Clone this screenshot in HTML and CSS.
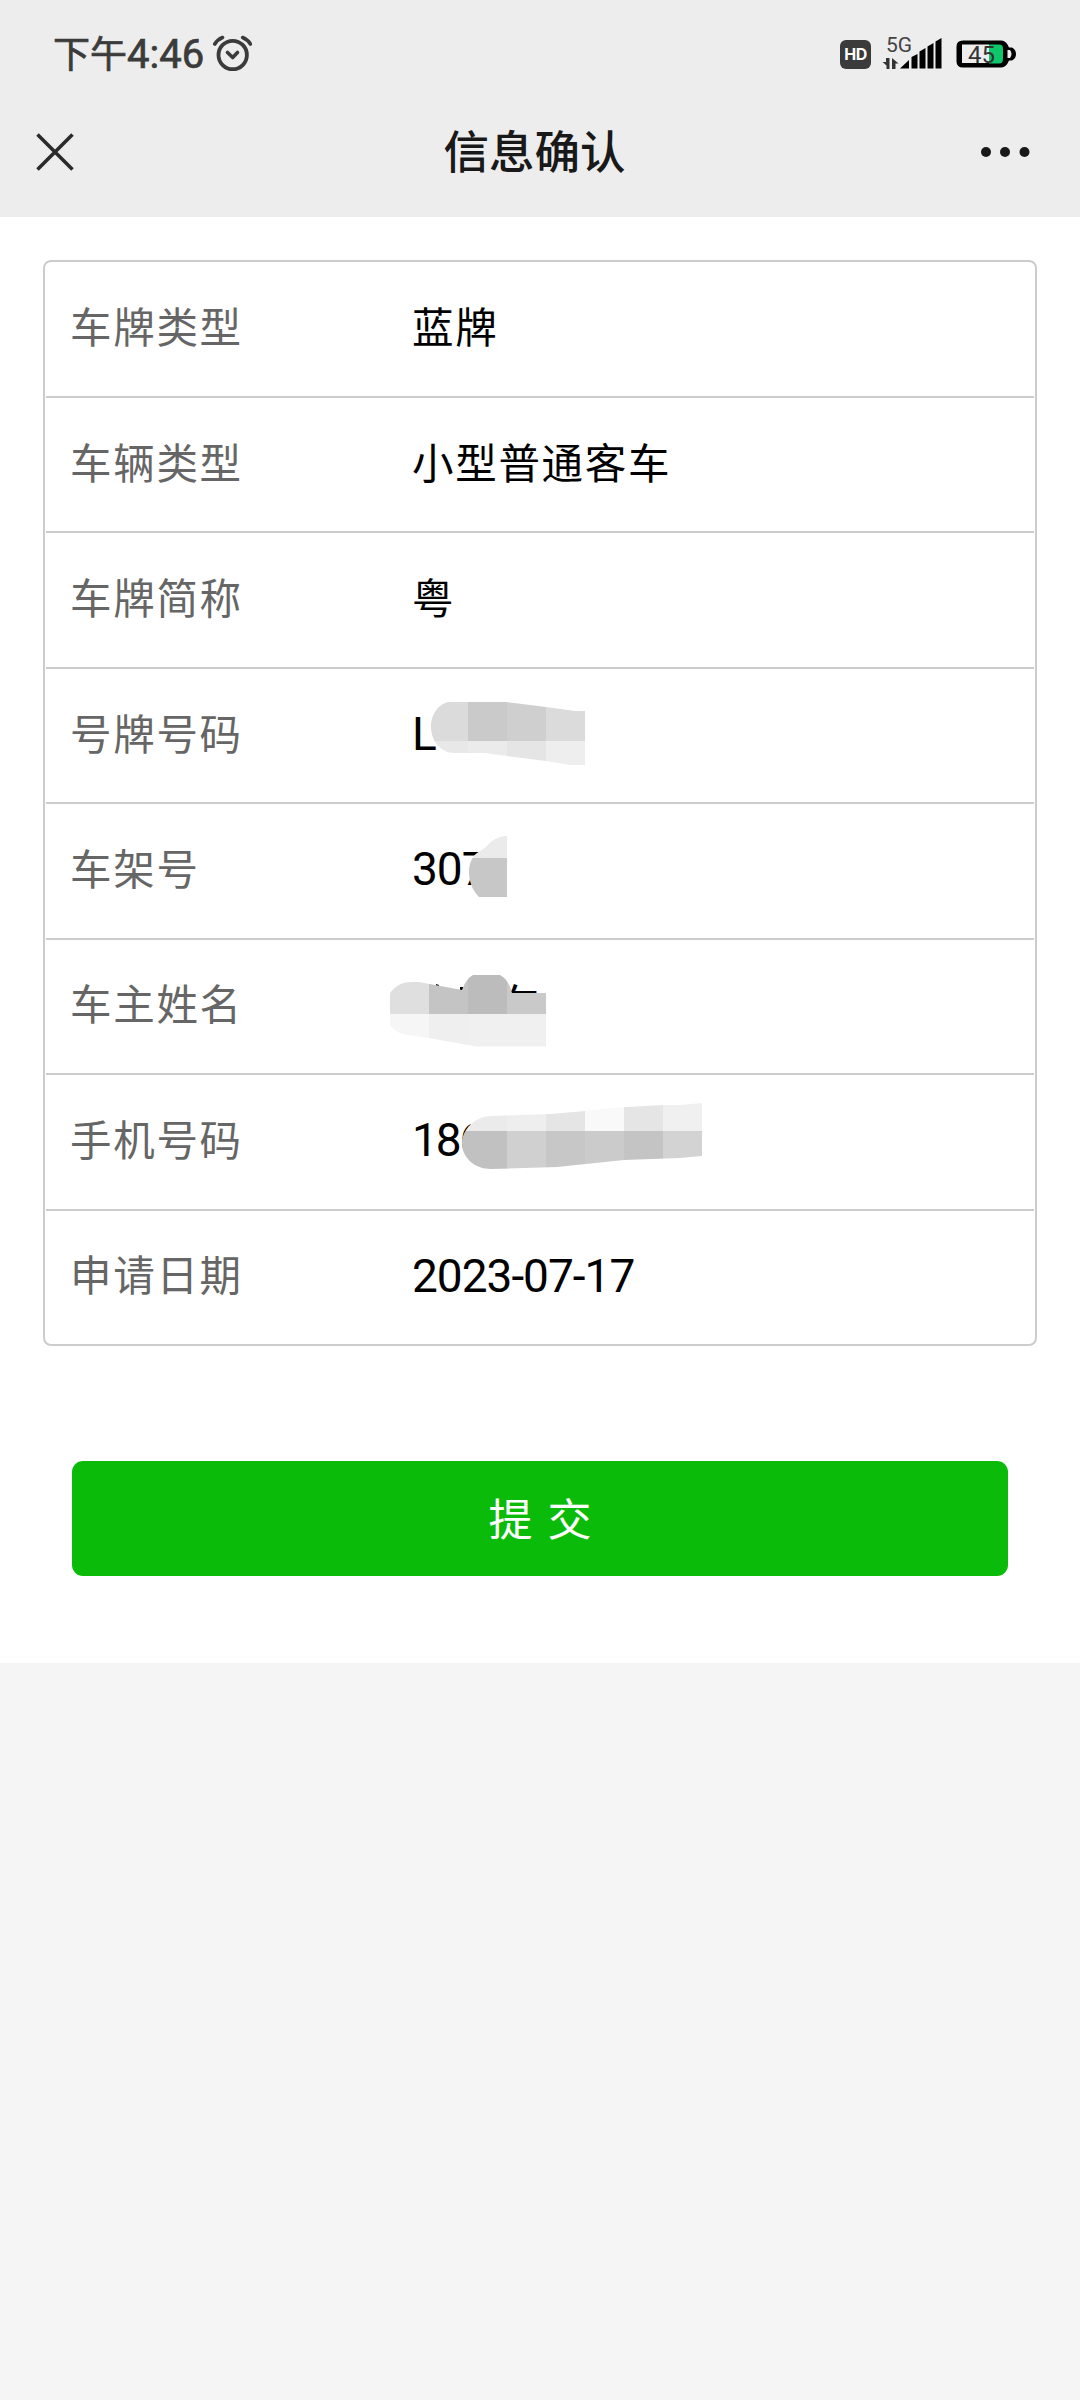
FILE: index.html
```
<!DOCTYPE html>
<html lang="zh-CN">
<head>
<meta charset="utf-8">
<title>信息确认</title>
<link rel="stylesheet" href="styles.css">
</head>
<body>
<header class="top">
  <div class="status">
    <span class="clock"><span class="period">下午</span>4:46</span>
    <svg class="alarm" width="40" height="38" viewBox="212 35 40 38" fill="none" stroke="#3b3b3b" stroke-linecap="round" stroke-linejoin="round">
      <circle cx="232.700" cy="55" r="14.200" stroke-width="3.800"/>
      <path d="M227.500 52.500l5.200 5 4.800-5" stroke-width="3.600"/>
      <path d="M214.800 44Q217.500 39.500 222.500 37.500M250.400 44Q247.500 39.500 242.700 37.500" stroke-width="3.600"/>
    </svg>
    <span class="hd">HD</span>
    <svg class="signal" width="62" height="56" viewBox="882 26 62 56">
      <text class="net" x="886" y="51.500">5G</text>
      <path fill="#333" d="M889.500 58v11h-3v-3.500l-4-3.500h3.500v-4zM892 58l6.500 5.500h-3v5.500h-3.500z"/>
      <path d="M900 68.500l9-8.500v8.500zM911.500 57l6-3v14.500h-6zM919.500 51.500l6-3.500v20.500h-6zM927.500 46.500l6-3.500v25.500h-6zM935.500 41.500l6-3.500v30.500h-6z"/>
    </svg>
    <svg class="battery" width="62" height="30" viewBox="955 39 62 30">
      <path d="M963 40.500h38q4 0 6.500 4l1.500 3h3q4 2 4 6.500t-4 6.500h-3l-1.500 3q-2.500 4-6.500 4h-38q-6.500 0-6.500-6v-15q0-6 6.500-6z"/>
      <rect x="962" y="44.500" width="27" height="18.500" fill="#ededed"/>
      <path d="M989 44.500h10q4 0 4 4v10.500q0 4.500-4 4.500h-10z" fill="#0dc76b"/>
      <path d="M1007.500 50h2.500q1.500 2 1.500 4t-1.500 4h-2.500z" fill="#ededed"/>
      <text class="charge" x="968" y="62.500">45</text>
    </svg>
  </div>
  <nav class="nav">
    <svg class="close" width="38" height="38" viewBox="0 0 38 38" stroke="#2b2b2b" stroke-width="3.600"><path d="M1.500 1.500l35 35M36.500 1.500l-35 35"/></svg>
    <h1 class="title">信息确认</h1>
    <svg class="more" width="50" height="12" viewBox="0 0 50 12" fill="#191919"><circle cx="6" cy="6" r="5"/><circle cx="25" cy="6" r="5"/><circle cx="44.500" cy="6" r="5"/></svg>
  </nav>
</header>
<main class="page">
  <dl class="card">
    <div class="row"><dt>车牌类型</dt><dd>蓝牌</dd></div>
    <div class="row"><dt>车辆类型</dt><dd>小型普通客车</dd></div>
    <div class="row"><dt>车牌简称</dt><dd>粤</dd></div>
    <div class="row"><dt>号牌号码</dt><dd class="num">L
      <svg class="mask" viewBox="380 668 330 134">
        <clipPath id="plate"><path d="M449 702H507L546 707L575 711H585V765H570L546 761L507 756L485 753H455C440 753 431 740 431 727C431 713 440 703 449 702Z"/></clipPath>
        <g clip-path="url(#plate)">
          <path fill="#dbdbdb" d="M430 700h38v41h-38z"/><path fill="#cacaca" d="M468 700h39v41h-39z"/><path fill="#cfcfcf" d="M507 700h39v41h-39z"/><path fill="#dbdbdb" d="M546 700h39v41h-39z"/>
          <path fill="#e8e8e8" d="M430 741h38v25h-38z"/><path fill="#ebebeb" d="M468 741h39v25h-39z"/><path fill="#e5e5e5" d="M507 741h39v25h-39z"/><path fill="#eee" d="M546 741h39v25h-39z"/>
        </g>
      </svg></dd></div>
    <div class="row"><dt>车架号</dt><dd class="num">307
      <svg class="mask" viewBox="380 803 330 134">
        <clipPath id="frame"><path d="M507 836C498 836 492 840 486 847L477 853C470 858 469 868 469 872C469 885 475 893 479 897H507Z"/></clipPath>
        <g clip-path="url(#frame)"><path fill="#ebebeb" d="M468 835h39v23h-39z"/><path fill="#c7c7c7" d="M468 858h39v40h-39z"/></g>
      </svg></dd></div>
    <div class="row"><dt>车主姓名</dt><dd class="owner">车
      <svg class="mask" viewBox="380 939 330 134">
        <path d="M436 984l3 1v3h-3zM460 987h3v3h-3z"/>
        <path fill="#fff" d="M507 993h39v30h-39z"/>
        <clipPath id="owner"><path d="M390 993C396 985 403 982 412 982H419L462 990C465 982 469 977 473 975H500C507 979 510 985 512 993H546V1046.500H477L468 1045L429 1038L405 1034.500C398 1033 393 1029 390 1025Z"/></clipPath>
        <g clip-path="url(#owner)">
          <path fill="#dfdfdf" d="M390 974h39v40h-39z"/><path fill="#c4c4c4" d="M429 974h39v40h-39z"/><path fill="#bcbcbc" d="M468 974h39v40h-39z"/><path fill="#c9c9c9" d="M507 974h39v40h-39z"/>
          <path fill="#f6f6f6" d="M390 1014h39v33h-39z"/><path fill="#efefef" d="M429 1014h39v33h-39z"/><path fill="#f0f0f0" d="M468 1014h78v33h-78z"/>
        </g>
      </svg></dd></div>
    <div class="row"><dt>手机号码</dt><dd class="num phone">186
      <svg class="mask" viewBox="380 1074 330 134">
        <clipPath id="phone"><path d="M702 1103L680 1105H663L611 1108L585 1111L551 1114L491 1116C475 1116 462 1130 462 1143C462 1158 475 1169 491 1169L557 1167L624 1160L680 1158L702 1156Z"/></clipPath>
        <g clip-path="url(#phone)">
          <path fill="#ebebeb" d="M460 1100h47v31h-47z"/><path fill="#eee" d="M507 1100h39v31h-39z"/><path fill="#e5e5e5" d="M546 1100h39v31h-39z"/><path fill="#f9f9f9" d="M585 1100h39v31h-39z"/><path fill="#e5e5e5" d="M624 1100h39v31h-39z"/><path fill="#f0f0f0" d="M663 1100h39v31h-39z"/>
          <path fill="#c1c1c1" d="M460 1131h47v40h-47z"/><path fill="#d0d0d0" d="M507 1131h39v40h-39z"/><path fill="#c7c7c7" d="M546 1131h39v40h-39z"/><path fill="#cbcbcb" d="M585 1131h39v40h-39z"/><path fill="#c4c4c4" d="M624 1131h39v40h-39z"/><path fill="#d3d3d3" d="M663 1131h39v40h-39z"/>
        </g>
      </svg></dd></div>
    <div class="row"><dt>申请日期</dt><dd class="num">2023-07-17</dd></div>
  </dl>
  <button class="submit" type="button">提 交</button>
</main>
</body>
</html>
```
FILE: styles.css
```
* { box-sizing: border-box; }
body {
  margin: 0;
  min-height: 2400px;
  background: #f5f5f5;
  color: #000;
  font-family: Roboto, "Noto Sans CJK SC", sans-serif;
}
.top { height: 217px; background: #ededed; }
.status { display: flex; align-items: center; height: 108px; padding: 0 63px 0 53px; }
.clock { width: 159px; padding-top: 2px; font-size: 40px; line-height: 48px; font-weight: 400; color: #3b3b3b; white-space: nowrap; -webkit-text-stroke: 0.7px #3b3b3b; }
.period { font-size: 37px; }
.alarm { margin-right: auto; }
.hd {
  width: 31px; height: 29px; border-radius: 6px; background: #3b3b3b; color: #fff;
  font: 700 16px/29px Inter, sans-serif; text-align: center; letter-spacing: -0.5px;
}
.signal { margin-left: 11px; }
.battery { margin-left: 11px; }
.net { font-size: 21px; fill: #444; }
.charge { font-size: 24px; fill: #333; }
.nav { display: grid; grid-template-columns: 1fr auto 1fr; align-items: center; height: 88px; padding: 0 41px 0 36px; }
.more { justify-self: end; margin-right: 9px; }
.title { margin: 3px 0 0; padding-right: 6px; font-size: 45.5px; line-height: 60px; font-weight: 500; color: #191919; }
.page { height: 1446px; padding: 43px; background: #fff; }
.card { width: 994px; height: 1086px; margin: 0; border: 2px solid #ccc; border-radius: 8px; display: grid; grid-template-rows: 134px repeat(7, 1fr); }
.row { display: grid; grid-template-columns: 342px 1fr; align-items: center; margin: 0 1px; padding-left: 24px; font-size: 41.5px; line-height: 60px; letter-spacing: 1.700px; }
.row + .row { border-top: 2px solid #ccc; }
dt { color: #666; }
dd { margin: 0; position: relative; }
.num { padding-bottom: 3px; font-size: 46px; letter-spacing: -1px; }
.phone { letter-spacing: -2.200px; }
.mask { position: absolute; left: -32px; top: -37px; width: 330px; height: 134px; }
.num .mask { top: -36px; }
.owner { padding-left: 86px; }
.submit {
  display: block; width: 936px; height: 115px; margin: 115px 0 0 29px; padding: 0 0 2px; border: 0; border-radius: 11px;
  background: #0bbb0a; color: #fff; font: 400 44px/113px "Noto Sans CJK SC", sans-serif; word-spacing: 5px;
}
```
